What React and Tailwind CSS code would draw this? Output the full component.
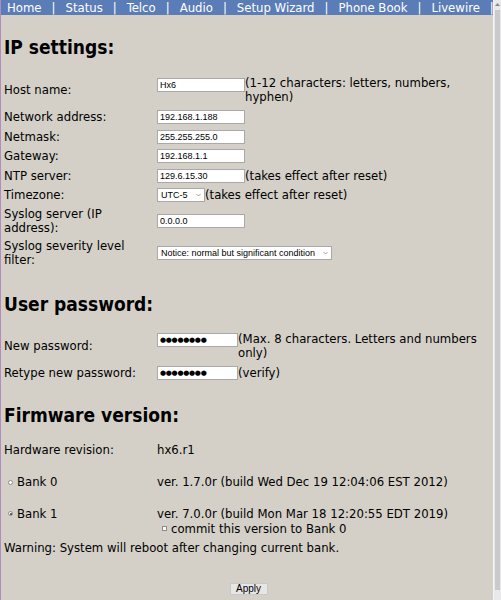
import React from 'react'

const NAV = ['Home', 'Status', 'Telco', 'Audio', 'Setup Wizard', 'Phone Book', 'Livewire']

function TextBox({ value, width = 'w-[88px]' }) {
  return (
    <input
      readOnly
      type="text"
      value={value}
      className={`${width} h-[14px] shrink-0 border border-[#a9a9a9] bg-white px-[2px] font-['Liberation_Sans'] text-[9px] leading-[12px] text-black outline-none`}
    />
  )
}

function PasswordBox() {
  return (
    <div className="flex h-[14px] w-[81px] shrink-0 items-center border border-[#a9a9a9] bg-white pl-[2px] font-['DejaVu_Sans'] text-[7px] leading-[12px] tracking-[-0.3px] text-black">
      ●●●●●●●●
    </div>
  )
}

function SelectBox({ value, width }) {
  return (
    <div className={`${width} flex h-[14px] shrink-0 items-center justify-between border border-[#a9a9a9] bg-white pl-[3px] pr-[2px] font-['Liberation_Sans'] text-[9px] leading-[12px] text-black`}>
      <span className="whitespace-nowrap">{value}</span>
      <svg width="5" height="4" viewBox="0 0 5 4" className="mr-[1px]">
        <path d="M0.5 1 L2.5 3 L4.5 1" fill="none" stroke="#8a8a8a" strokeWidth="0.8" />
      </svg>
    </div>
  )
}

function Row({ label, h, children }) {
  return (
    <div className={`flex ${h} items-center`}>
      <div className="w-[153px] shrink-0 leading-[14px]">{label}</div>
      <div className="flex flex-1 items-center leading-[14px]">{children}</div>
    </div>
  )
}

function Heading({ children, className }) {
  return <h2 className={`text-[19px] font-bold leading-[22px] ${className}`}>{children}</h2>
}

export default function App() {
  return (
    <div className="flex h-[600px] w-[501px] overflow-hidden bg-[#d4d0c8] font-['DejaVu_Sans_Condensed','DejaVu_Sans',sans-serif] text-[13px] text-black">
      {/* window edge */}
      <div className="w-px shrink-0 bg-[#b48ac4]" />

      <div className="flex w-[492px] shrink-0 flex-col">
        {/* nav bar */}
        <div className="flex h-[15px] items-center overflow-hidden whitespace-nowrap bg-[#5b7db7] pl-px leading-[15px] text-white">
          {NAV.map((item) => (
            <React.Fragment key={item}>
              <span className="shrink-0 px-[5px]">{item}</span>
              <span className="shrink-0 px-[5px]">|</span>
            </React.Fragment>
          ))}
        </div>

        <div className="flex flex-col pl-[3px]">
          <Heading className="mt-[21px]">IP settings:</Heading>

          <div className="mt-[15px] flex flex-col">
            <Row label="Host name:" h="h-[34px]">
              <div className="flex items-start">
                <div className="pt-px"><TextBox value="Hx6" /></div>
                <span className="w-[240px]">(1-12 characters: letters, numbers, hyphen)</span>
              </div>
            </Row>
            <Row label="Network address:" h="h-[20px]"><TextBox value="192.168.1.188" /></Row>
            <Row label="Netmask:" h="h-[19px]"><TextBox value="255.255.255.0" /></Row>
            <Row label="Gateway:" h="h-[20px]"><TextBox value="192.168.1.1" /></Row>
            <Row label="NTP server:" h="h-[19px]">
              <TextBox value="129.6.15.30" />
              <span>(takes effect after reset)</span>
            </Row>
            <Row label="Timezone:" h="h-[19px]">
              <SelectBox value="UTC-5" width="w-[48px]" />
              <span>(takes effect after reset)</span>
            </Row>
            <Row label={<>Syslog server (IP<br />address):</>} h="h-[34px]">
              <TextBox value="0.0.0.0" />
            </Row>
            <Row label={<>Syslog severity level<br />filter:</>} h="h-[30px]">
              <SelectBox value="Notice: normal but significant condition" width="w-[175px]" />
            </Row>
          </div>

          <Heading className="mt-[25px]">User password:</Heading>

          <div className="mt-[14px] flex flex-col">
            <Row label="New password:" h="h-[34px]">
              <div className="flex items-start">
                <div className="pt-px"><PasswordBox /></div>
                <span className="w-[250px]">(Max. 8 characters. Letters and numbers only)</span>
              </div>
            </Row>
            <Row label="Retype new password:" h="h-[20px]">
              <PasswordBox />
              <span>(verify)</span>
            </Row>
          </div>

          <Heading className="mt-[21px]">Firmware version:</Heading>

          <div className="mt-[15px] flex flex-col">
            <Row label="Hardware revision:" h="h-[18px]">
              <span>hx6.r1</span>
            </Row>
            <div className="mt-[14px] flex h-[18px] items-center">
              <div className="flex w-[153px] items-center">
                <span className="ml-[4px] mr-[4px] h-[5px] w-[5px] rounded-full border border-[#8c8c8c] bg-white" />
                <span>Bank 0</span>
              </div>
              <span>ver. 1.7.0r (build Wed Dec 19 12:04:06 EST 2012)</span>
            </div>
            <div className="mt-[15px] flex">
              <div className="flex h-[15px] w-[153px] items-center">
                <span className="ml-[4px] mr-[4px] flex h-[5px] w-[5px] items-center justify-center rounded-full border border-[#8c8c8c] bg-white">
                  <span className="h-[2px] w-[2px] rounded-full bg-[#333]" />
                </span>
                <span>Bank 1</span>
              </div>
              <div className="flex flex-col leading-[15px]">
                <span>ver. 7.0.0r (build Mon Mar 18 12:20:55 EDT 2019)</span>
                <div className="flex items-center">
                  <span className="ml-[5px] mr-[4px] h-[5px] w-[5px] border border-[#8c8c8c] bg-white" />
                  <span>commit this version to Bank 0</span>
                </div>
              </div>
            </div>
            <div className="mt-[4px] leading-[15px]">Warning: System will reboot after changing current bank.</div>
          </div>

          <div className="mt-[28px] flex justify-center">
            <button className="h-[12px] w-[38px] border border-[#c8c8c8] bg-[#e6e6e6] font-['Liberation_Sans'] text-[10px] leading-[10px] text-black">
              Apply
            </button>
          </div>
        </div>
      </div>

      {/* scrollbar */}
      <div className="flex w-[8px] shrink-0 flex-col border-l border-[#f4f4f4] bg-[#e9e9ec]">
        <div className="flex h-[9px] items-center justify-center">
          <svg width="5" height="3" viewBox="0 0 5 3">
            <path d="M0 3 L2.5 0 L5 3 Z" fill="#888" />
          </svg>
        </div>
        <div className="mx-[1px] mt-[1px] h-[580px] bg-[#c9c9ce]" />
      </div>
    </div>
  )
}
